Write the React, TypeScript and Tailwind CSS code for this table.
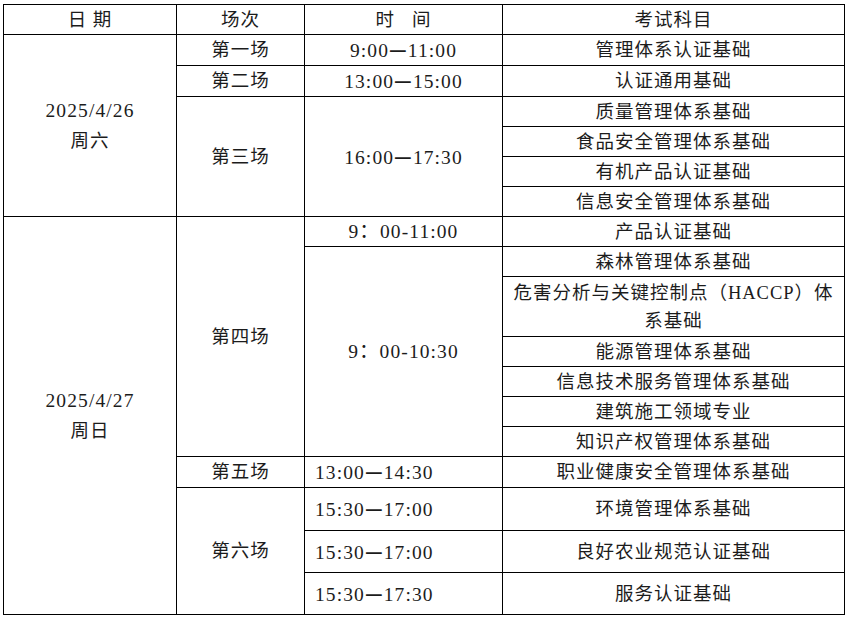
import React from 'react'

const cell = 'border border-black p-0 text-center align-middle'
const latin = 'text-[19.5px] tracking-[1.1px]'

function Row({ h, children }: { h: number; children: React.ReactNode }) {
  return <tr style={{ height: h }}>{children}</tr>
}

// thick full-width dash, like the Song-font one in the source document
function Dash() {
  return <span className="font-bold" style={{ fontFamily: '"Noto Sans CJK SC", sans-serif' }}>—</span>
}

export default function App() {
  return (
    <div className="min-h-screen bg-white pt-[4px] pl-[3px]">
      <table
        className="table-fixed border-collapse text-[18.5px] leading-[28px] tracking-[1px] text-[#1c1c1c]"
        style={{ fontFamily: '"Liberation Serif", "Noto Sans CJK SC", serif', width: 841 }}
      >
        <colgroup>
          <col className="w-[173px]" />
          <col className="w-[128px]" />
          <col className="w-[198px]" />
          <col className="w-[342px]" />
        </colgroup>
        <tbody>
          <Row h={30}>
            <td className={cell}>日 期</td>
            <td className={cell}>场次</td>
            <td className={cell}>时&nbsp;&nbsp;&nbsp;间</td>
            <td className={cell}>考试科目</td>
          </Row>

          {/* 4/26 */}
          <Row h={30}>
            <td className={cell} rowSpan={6}>
              <div className={`${latin} leading-[30px]`}>2025/4/26</div>
              <div className="leading-[30px]">周六</div>
            </td>
            <td className={cell}>第一场</td>
            <td className={`${cell} ${latin}`}>9:00<Dash />11:00</td>
            <td className={cell}>管理体系认证基础</td>
          </Row>
          <Row h={30}>
            <td className={cell}>第二场</td>
            <td className={`${cell} ${latin}`}>13:00<Dash />15:00</td>
            <td className={cell}>认证通用基础</td>
          </Row>
          <Row h={30}>
            <td className={cell} rowSpan={4}>第三场</td>
            <td className={`${cell} ${latin}`} rowSpan={4}>16:00<Dash />17:30</td>
            <td className={cell}>质量管理体系基础</td>
          </Row>
          <Row h={30}>
            <td className={cell}>食品安全管理体系基础</td>
          </Row>
          <Row h={30}>
            <td className={cell}>有机产品认证基础</td>
          </Row>
          <Row h={30}>
            <td className={cell}>信息安全管理体系基础</td>
          </Row>

          {/* 4/27 */}
          <Row h={30}>
            <td className={cell} rowSpan={11}>
              <div className={`${latin} leading-[30px]`}>2025/4/27</div>
              <div className="leading-[30px]">周日</div>
            </td>
            <td className={cell} rowSpan={7}>第四场</td>
            <td className={`${cell} ${latin}`}>9：00-11:00</td>
            <td className={cell}>产品认证基础</td>
          </Row>
          <Row h={30}>
            <td className={`${cell} ${latin}`} rowSpan={6}>9：00-10:30</td>
            <td className={cell}>森林管理体系基础</td>
          </Row>
          <Row h={60}>
            <td className={`${cell} px-[6px]`}>危害分析与关键控制点（HACCP）体系基础</td>
          </Row>
          <Row h={30}>
            <td className={cell}>能源管理体系基础</td>
          </Row>
          <Row h={30}>
            <td className={cell}>信息技术服务管理体系基础</td>
          </Row>
          <Row h={30}>
            <td className={cell}>建筑施工领域专业</td>
          </Row>
          <Row h={30}>
            <td className={cell}>知识产权管理体系基础</td>
          </Row>
          <Row h={30}>
            <td className={cell}>第五场</td>
            <td className={`${cell} ${latin} pl-[10px] text-left`}>13:00<Dash />14:30</td>
            <td className={cell}>职业健康安全管理体系基础</td>
          </Row>
          <Row h={43}>
            <td className={cell} rowSpan={3}>第六场</td>
            <td className={`${cell} ${latin} pl-[10px] text-left`}>15:30<Dash />17:00</td>
            <td className={cell}>环境管理体系基础</td>
          </Row>
          <Row h={42}>
            <td className={`${cell} ${latin} pl-[10px] text-left`}>15:30<Dash />17:00</td>
            <td className={cell}>良好农业规范认证基础</td>
          </Row>
          <Row h={42}>
            <td className={`${cell} ${latin} pl-[10px] text-left`}>15:30<Dash />17:30</td>
            <td className={cell}>服务认证基础</td>
          </Row>
        </tbody>
      </table>
    </div>
  )
}
